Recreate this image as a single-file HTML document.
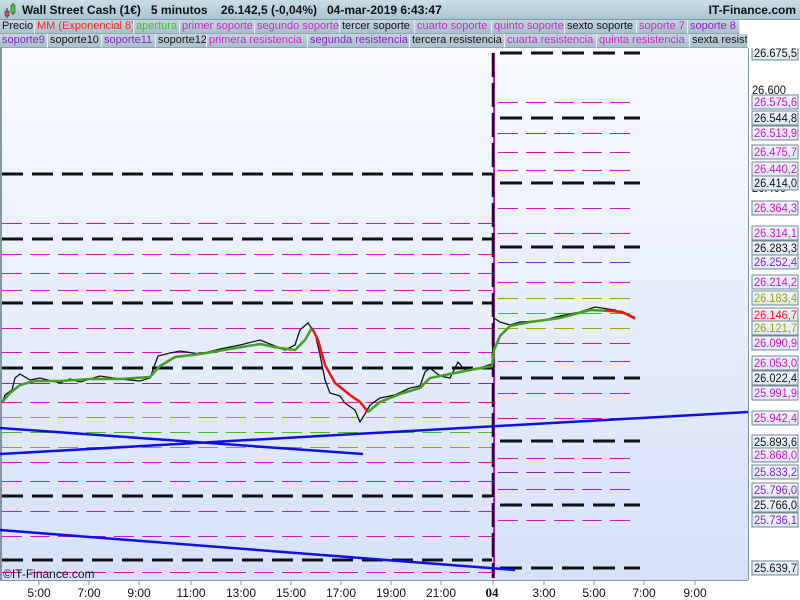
<!DOCTYPE html>
<html><head><meta charset="utf-8"><style>
*{margin:0;padding:0;box-sizing:border-box}
body{width:800px;height:600px;overflow:hidden;font-family:"Liberation Sans",sans-serif;background:#fff;position:relative}
#hdr{position:absolute;left:0;top:0;width:800px;height:20px;background:linear-gradient(#c9dde6,#a9c6d3);border-bottom:1px solid #7f98a3;font-size:12px;font-weight:bold;color:#111}
#hdr span{position:absolute;top:3px}
.row{position:absolute;left:0;height:14px;font-size:11px;line-height:13px}
.row div{position:absolute;top:0;height:14px;background:linear-gradient(#c4d6df,#a9c1cc);border-right:1px solid #e8eef2;border-bottom:1px solid #8ea4ae;padding:0 2px;white-space:nowrap;overflow:hidden}
.m{color:#d020d0}.p{color:#8a20c8}.k{color:#111}.r{color:#ff2020}.g{color:#40c020}
</style></head><body>
<div id="hdr">
<svg style="position:absolute;left:3px;top:2px" width="14" height="17"><line x1="4" y1="6" x2="4" y2="16" stroke="#333"/><rect x="2" y="9" width="4" height="5" fill="#e05050" stroke="#333" stroke-width="0.6"/><line x1="10" y1="1" x2="10" y2="13" stroke="#333"/><rect x="8" y="3" width="4" height="8" fill="#40d040" stroke="#333" stroke-width="0.6"/></svg>
<span style="left:22px">Wall Street Cash (1€)&nbsp;&nbsp;&nbsp;5 minutos&nbsp;&nbsp;&nbsp;&nbsp;26.142,5 (-0,04%)&nbsp;&nbsp;&nbsp;04-mar-2019 6:43:47</span>
<span style="right:4px">IT-Finance.com</span></div>
<div class="row" style="top:20px">
<div class="k" style="left:0;width:35px">Precio</div><div class="r" style="left:35px;width:99px">MM (Exponencial 8)</div><div class="g" style="left:134px;width:46px">apertura</div><div class="m" style="left:180px;width:75px">primer soporte</div><div class="m" style="left:255px;width:85px">segundo soporte</div><div class="k" style="left:340px;width:75px">tercer soporte</div><div class="m" style="left:415px;width:77px">cuarto soporte</div><div class="m" style="left:492px;width:73px">quinto soporte</div><div class="k" style="left:565px;width:72px">sexto soporte</div><div class="m" style="left:637px;width:51px">soporte 7</div><div class="p" style="left:688px;width:52px">soporte 8</div></div>
<div class="row" style="top:34px">
<div class="p" style="left:0;width:48px">soporte9</div><div class="k" style="left:48px;width:54px">soporte10</div><div class="p" style="left:102px;width:54px">soporte11</div><div class="k" style="left:156px;width:51px">soporte12</div><div class="m" style="left:207px;width:101px">primera resistencia</div><div class="p" style="left:308px;width:102px">segunda resistencia</div><div class="k" style="left:410px;width:95px">tercera resistencia</div><div class="m" style="left:505px;width:92px">cuarta resistencia</div><div class="m" style="left:597px;width:93px">quinta resistencia</div><div class="k" style="left:690px;width:58px">sexta resist</div></div>
<svg style="position:absolute;left:0;top:48px" width="800" height="552" viewBox="0 48 800 552" font-family="Liberation Sans, sans-serif">
<defs><linearGradient id="bg" x1="0" y1="0" x2="0" y2="1"><stop offset="0" stop-color="#f8faff"/><stop offset="1" stop-color="#d6e1fa"/></linearGradient>
<linearGradient id="lb" x1="0" y1="0" x2="0" y2="1"><stop offset="0" stop-color="#f4f8fc"/><stop offset="1" stop-color="#dde8f0"/></linearGradient></defs>
<rect x="0" y="48" width="748" height="532" fill="url(#bg)"/>
<rect x="748" y="48" width="52" height="552" fill="#fff"/>
<rect x="0" y="580" width="748" height="20" fill="#fff"/>
<line x1="1" y1="48" x2="1" y2="580" stroke="#7f98a3" stroke-width="2"/>
<line x1="748.5" y1="48" x2="748.5" y2="580" stroke="#7f98a3"/>
<line x1="0" y1="580.5" x2="748" y2="580.5" stroke="#7f98a3"/>
<g fill="none">
<g stroke="#111" stroke-width="3" stroke-dasharray="21 9">
<path d="M2 174H492M2 239H492M2 303H492M2 368H492M2 496H492M2 560H492"/></g>
<g transform="translate(0,0.5)">
<g stroke="#d010d0" stroke-width="1" stroke-dasharray="20 8">
<path d="M2 223H492M2 254H492M2 273H492M2 290H492M2 328H492M2 352H492M2 402H492M2 462H492M2 481H492M2 511H492M2 536H492M2 572H492"/></g>
<path d="M2 383H492" stroke="#8a20c8" stroke-dasharray="20 8"/>
<path d="M2 417H492M2 447H492" stroke="#a0a000" stroke-dasharray="20 8"/>
<path d="M2 432H492" stroke="#40c020" stroke-dasharray="20 8"/>
<g stroke="#d010d0" stroke-dasharray="20 8">
<path d="M498 102H632M498 133H632M498 152H632M498 170H632M498 208H632M498 233H632M498 282H632M498 343H632M498 361H632M498 393H632M498 418H632M498 458H632M498 520H632"/></g>
<path d="M498 262H632M498 472H632M498 489H632" stroke="#8a20c8" stroke-dasharray="20 8"/>
<path d="M498 298H632M498 328H632" stroke="#a0a000" stroke-dasharray="20 8"/>
<path d="M498 313H632" stroke="#40c020" stroke-dasharray="20 8"/>
</g>
<g stroke="#111" stroke-width="3" stroke-dasharray="22 9">
<path d="M500 53H640M500 118H640M500 183H640M500 247H640M500 378H640M500 441H640M500 505H640M500 568H640"/></g>
<line x1="494" y1="53" x2="494" y2="578" stroke="#d010d0" stroke-width="2"/>
<line x1="493" y1="53" x2="493" y2="578" stroke="#111" stroke-width="2.5" stroke-dasharray="24 6"/>
<g stroke="#1010e0" stroke-width="2.5">
<path d="M0 428L363 454M0 454L748 412M0 530L515 570"/></g>
<polyline stroke="#111" stroke-width="1.3" points="2,403 5,395 12,390 15,378 20,374 30,380 40,378 60,383 70,379 80,382 100,376 120,379 140,381 150,378 158,356 170,353 180,351 200,354 220,349 240,345 260,340 270,344 285,350 295,345 300,330 308,323 315,333 320,355 325,380 330,393 340,396 345,403 355,410 360,422 365,414 370,405 380,398 395,395 410,388 420,386 425,372 430,368 440,376 450,378 458,362 465,370 480,368 492,364 494,318 500,322 510,325 520,322 540,321 560,316 580,312 595,307 615,310 625,314 635,319"/>
<polyline stroke="#40a020" stroke-width="2.5" points="2,402 10,393 20,385 35,381 60,381 90,379 120,379 150,377 160,366 175,357 200,354 230,349 260,344 280,348 295,350 305,340 312,328"/>
<polyline stroke="#ff1010" stroke-width="2.5" points="312,328 318,340 325,365 335,383 350,395 360,402 368,412"/>
<polyline stroke="#40a020" stroke-width="2.5" points="368,412 380,402 400,394 420,388 430,378 450,374 470,370 492,366 494,350 500,336 510,326 530,322 560,318 590,310 610,311 622,312"/>
<polyline stroke="#ff1010" stroke-width="2.5" points="605,310 622,312 635,318"/>
</g>
<g font-size="11.5" fill="#111">
<text x="752" y="94" textLength="34" lengthAdjust="spacingAndGlyphs">26.600</text>
<text x="752" y="192" textLength="34" lengthAdjust="spacingAndGlyphs">26.400</text>
</g>
<g stroke="#6f8894" fill="url(#lb)">
<rect x="752" y="46" width="46" height="14"/><rect x="752" y="95" width="46" height="14"/><rect x="752" y="111" width="46" height="14"/><rect x="752" y="126" width="46" height="14"/><rect x="752" y="145" width="46" height="14"/><rect x="752" y="162" width="46" height="14"/><rect x="752" y="176" width="46" height="14"/><rect x="752" y="201" width="46" height="14"/><rect x="752" y="226" width="46" height="14"/><rect x="752" y="241" width="46" height="14"/><rect x="752" y="255" width="46" height="14"/><rect x="752" y="275" width="46" height="14"/><rect x="752" y="291" width="46" height="14"/><rect x="752" y="308" width="46" height="14"/><rect x="752" y="321" width="46" height="14"/><rect x="752" y="336" width="46" height="14"/><rect x="752" y="356" width="46" height="14"/><rect x="752" y="371" width="46" height="14"/><rect x="752" y="386" width="46" height="14"/><rect x="752" y="411" width="46" height="14"/><rect x="752" y="435" width="46" height="14"/><rect x="752" y="448" width="46" height="14"/><rect x="752" y="465" width="46" height="14"/><rect x="752" y="483" width="46" height="14"/><rect x="752" y="498" width="46" height="14"/><rect x="752" y="513" width="46" height="14"/><rect x="752" y="561" width="46" height="14"/></g>
<g font-size="11.5">
<text x="754" y="57" fill="#111" textLength="43" lengthAdjust="spacingAndGlyphs">26.675,5</text>
<text x="754" y="106" fill="#d010d0" textLength="43" lengthAdjust="spacingAndGlyphs">26.575,6</text>
<text x="754" y="122" fill="#111" textLength="43" lengthAdjust="spacingAndGlyphs">26.544,8</text>
<text x="754" y="137" fill="#d010d0" textLength="43" lengthAdjust="spacingAndGlyphs">26.513,9</text>
<text x="754" y="156" fill="#d010d0" textLength="43" lengthAdjust="spacingAndGlyphs">26.475,7</text>
<text x="754" y="173" fill="#d010d0" textLength="43" lengthAdjust="spacingAndGlyphs">26.440,2</text>
<text x="754" y="187" fill="#111" textLength="43" lengthAdjust="spacingAndGlyphs">26.414,0</text>
<text x="754" y="212" fill="#d010d0" textLength="43" lengthAdjust="spacingAndGlyphs">26.364,3</text>
<text x="754" y="237" fill="#d010d0" textLength="43" lengthAdjust="spacingAndGlyphs">26.314,1</text>
<text x="754" y="252" fill="#111" textLength="43" lengthAdjust="spacingAndGlyphs">26.283,3</text>
<text x="754" y="266" fill="#8a20c8" textLength="43" lengthAdjust="spacingAndGlyphs">26.252,4</text>
<text x="754" y="286" fill="#d010d0" textLength="43" lengthAdjust="spacingAndGlyphs">26.214,2</text>
<text x="754" y="302" fill="#a0a000" textLength="43" lengthAdjust="spacingAndGlyphs">26.183,4</text>
<text x="754" y="319" fill="#ff1010" textLength="43" lengthAdjust="spacingAndGlyphs">26.146,7</text>
<text x="754" y="332" fill="#a0a000" textLength="43" lengthAdjust="spacingAndGlyphs">26.121,7</text>
<text x="754" y="347" fill="#d010d0" textLength="43" lengthAdjust="spacingAndGlyphs">26.090,9</text>
<text x="754" y="367" fill="#d010d0" textLength="43" lengthAdjust="spacingAndGlyphs">26.053,0</text>
<text x="754" y="382" fill="#111" textLength="43" lengthAdjust="spacingAndGlyphs">26.022,4</text>
<text x="754" y="397" fill="#d010d0" textLength="43" lengthAdjust="spacingAndGlyphs">25.991,9</text>
<text x="754" y="422" fill="#d010d0" textLength="43" lengthAdjust="spacingAndGlyphs">25.942,4</text>
<text x="754" y="446" fill="#111" textLength="43" lengthAdjust="spacingAndGlyphs">25.893,6</text>
<text x="754" y="459" fill="#d010d0" textLength="43" lengthAdjust="spacingAndGlyphs">25.868,0</text>
<text x="754" y="476" fill="#8a20c8" textLength="43" lengthAdjust="spacingAndGlyphs">25.833,2</text>
<text x="754" y="494" fill="#8a20c8" textLength="43" lengthAdjust="spacingAndGlyphs">25.796,0</text>
<text x="754" y="509" fill="#111" textLength="43" lengthAdjust="spacingAndGlyphs">25.766,0</text>
<text x="754" y="524" fill="#8a20c8" textLength="43" lengthAdjust="spacingAndGlyphs">25.736,1</text>
<text x="754" y="572" fill="#111" textLength="43" lengthAdjust="spacingAndGlyphs">25.639,7</text>
</g>
<g font-size="12" fill="#111" text-anchor="middle">
<text x="39" y="597">5:00</text><text x="89" y="597">7:00</text><text x="139" y="597">9:00</text><text x="191" y="597">11:00</text><text x="241" y="597">13:00</text><text x="291" y="597">15:00</text><text x="341" y="597">17:00</text><text x="391" y="597">19:00</text><text x="441" y="597">21:00</text><text x="492" y="597" font-weight="bold" font-family="Liberation Serif, serif" font-size="13">04</text><text x="544" y="597">3:00</text><text x="594" y="597">5:00</text><text x="644" y="597">7:00</text><text x="695" y="597">9:00</text></g>
<g stroke="#7f98a3"><path d="M39 581v4M89 581v4M139 581v4M191 581v4M241 581v4M291 581v4M341 581v4M391 581v4M441 581v4M493 581v4M544 581v4M594 581v4M644 581v4M695 581v4"/></g>
<text x="3" y="578" font-size="12" fill="#111">©IT-Finance.com</text>
</svg>
</body></html>
